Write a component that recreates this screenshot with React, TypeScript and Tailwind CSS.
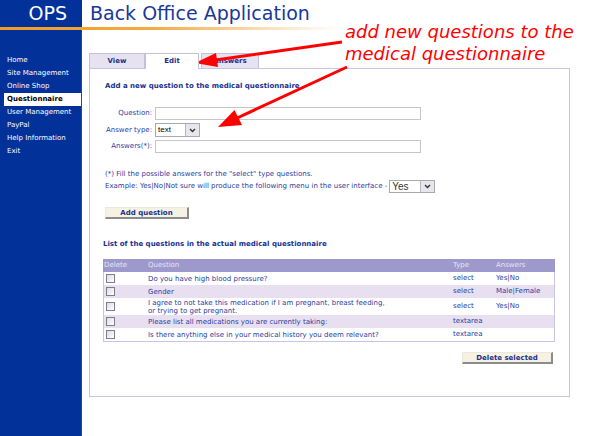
import React from 'react';

const menu = ['Home', 'Site Management', 'Online Shop', 'Questionnaire', 'User Management', 'PayPal', 'Help Information', 'Exit'];

const questions = [
  { q: 'Do you have high blood pressure?', type: 'select', answers: 'Yes|No', tall: false },
  { q: 'Gender', type: 'select', answers: 'Male|Female', tall: false },
  { q: 'I agree to not take this medication if I am pregnant, breast feeding,\nor trying to get pregnant.', type: 'select', answers: 'Yes|No', tall: true },
  { q: 'Please list all medications you are currently taking:', type: 'textarea', answers: '', tall: false },
  { q: 'Is there anything else in your medical history you deem relevant?', type: 'textarea', answers: '', tall: false },
];

const Chevron = () => (
  <svg width="7" height="5" viewBox="0 0 7 5">
    <path d="M1 1 L3.5 3.5 L6 1" fill="none" stroke="#333" strokeWidth="1.4" />
  </svg>
);

const FakeSelect = ({ value, width, bigText }: { value: string; width: string; bigText?: boolean }) => (
  <div className={`flex h-full ${width} items-stretch border border-[#a9a9b0] bg-white`}>
    <span className={`flex-1 pl-[2px] font-['Liberation_Sans',sans-serif] ${bigText ? 'text-[10px] leading-[11px] text-[#333]' : 'text-[8px] leading-[11px] text-black'}`}>{value}</span>
    <span className="flex w-[14px] items-center justify-center border-l border-[#b8b8c0] bg-[#e6e6ec]">
      <Chevron />
    </span>
  </div>
);

const Button = ({ label, width }: { label: string; width: string }) => (
  <div className={`${width} h-[12px] border-t border-l border-[#ece8dc] border-r-2 border-b-2 border-r-[#8c8c8c] border-b-[#8c8c8c] bg-[#f6f2e3] text-center text-[7px] font-bold leading-[10px] text-[#1b2f8c]`}>
    {label}
  </div>
);

export default function App() {
  return (
    <div className="relative h-[436px] w-[600px] overflow-hidden bg-white font-['DejaVu_Sans',sans-serif] text-[7px]">
      {/* Header */}
      <div className="flex h-[27px]">
        <div className="w-[82px] bg-[#02319a] pr-[15px] text-right text-[19px] leading-[27px] text-white">OPS</div>
        <div className="pl-[8px] text-[19px] leading-[27px] text-[#1a379b]">Back Office Application</div>
      </div>
      <div className="h-[3px] w-[340px] bg-[linear-gradient(to_right,#f29b22_0%,#f4aa45_45%,#fbe2c0_80%,#ffffff_100%)]" />

      <div className="flex h-[406px]">
        {/* Sidebar */}
        <nav className="w-[82px] border-r border-[#2247a8] bg-[#02319a] pt-[24px]">
          {menu.map((m) =>
            m === 'Questionnaire' ? (
              <div key={m} className="ml-[4px] h-[13px] bg-white pl-[3px] font-bold leading-[13px] text-black">
                {m}
              </div>
            ) : (
              <div key={m} className="h-[13px] pl-[7px] leading-[13px] text-white">
                {m}
              </div>
            )
          )}
        </nav>

        {/* Main */}
        <main className="flex-1 pl-[7px] pt-[22px]">
          {/* Tabs */}
          <div className="flex h-[16px] items-end">
            <div className="h-[15px] w-[56px] border border-b-0 border-[#c4c0dc] bg-[#e6e2f0] text-center font-bold leading-[14px] text-[#1b2f8c]">View</div>
            <div className="relative z-10 -mb-px h-[16px] w-[54px] border border-b-0 border-[#c4c0dc] bg-white text-center font-bold leading-[15px] text-[#1b2f8c]">Edit</div>
            <div className="ml-[2px] h-[15px] w-[58px] border border-b-0 border-[#c4c0dc] bg-[#e6e2f0] text-center font-bold leading-[14px] text-[#1b2f8c]">Answers</div>
          </div>

          {/* Panel */}
          <div className="h-[329px] w-[481px] border border-[#c8c4e6] bg-white">
            <div className="mt-[13px] pl-[15px] font-bold leading-[9px] text-[#16308f]">Add a new question to the medical questionnaire</div>

            <div className="mt-[16px] grid grid-cols-[65px_auto] gap-y-[3px] text-[#2a3c9e]">
              <div className="h-[13px] pr-[3px] text-right leading-[13px]">Question:</div>
              <div className="h-[13px] w-[266px] border border-[#c6c6cc] bg-white" />
              <div className="h-[14px] pr-[3px] text-right leading-[14px]">Answer type:</div>
              <div className="h-[14px]">
                <FakeSelect value="text" width="w-[45px]" />
              </div>
              <div className="h-[13px] pr-[3px] text-right leading-[13px]">Answers(*):</div>
              <div className="h-[13px] w-[266px] border border-[#c6c6cc] bg-white" />
            </div>

            <div className="mt-[17px] h-[9px] pl-[15px] leading-[9px] text-[#2a3c9e]">(*) Fill the possible answers for the "select" type questions.</div>
            <div className="flex h-[14px] items-center pl-[15px] text-[#2a3c9e]">
              <span>Example: Yes|No|Not sure will produce the following menu in the user interface -</span>
              <div className="ml-[2px] h-[13px]">
                <FakeSelect value="Yes" width="w-[46px]" bigText />
              </div>
            </div>

            <div className="mt-[14px] pl-[15px]">
              <Button label="Add question" width="w-[84px]" />
            </div>

            <div className="mt-[21px] pl-[13px] font-bold leading-[9px] text-[#16308f]">List of the questions in the actual medical questionnaire</div>

            {/* Table */}
            <div className="ml-[13px] mt-[10px] w-[452px]">
              <div className="grid h-[13px] grid-cols-[45px_305px_43px_59px] bg-[#9d99cc] leading-[13px] text-[#e6e4f7]">
                <span className="pl-[1px]">Delete</span>
                <span>Question</span>
                <span>Type</span>
                <span>Answers</span>
              </div>
              <div className="border-x border-b border-[#c8c4e6]">
                {questions.map((r, i) => (
                  <div
                    key={i}
                    className={`grid grid-cols-[44px_305px_43px_58px] items-center text-[#2a3c9e] ${r.tall ? 'h-[17px]' : 'h-[13px]'} ${i % 2 === 1 ? 'bg-[#e8e0f0]' : 'bg-white'}`}
                  >
                    <span className="pl-[2px]">
                      <span className="block h-[9px] w-[9px] border border-[#7c7c8c] bg-[linear-gradient(135deg,#dcdce4,#ffffff)]" />
                    </span>
                    <span className="whitespace-pre-line leading-[8px]">{r.q}</span>
                    <span>{r.type}</span>
                    <span>{r.answers}</span>
                  </div>
                ))}
              </div>
              <div className="mt-[10px] flex justify-end pr-[2px]">
                <Button label="Delete selected" width="w-[91px]" />
              </div>
            </div>
          </div>
        </main>
      </div>

      {/* Annotation */}
      <div className="absolute left-[345px] top-[21px] text-[18px] italic leading-[22px] text-[#ff0000]">
        add new questions to the
        <br />
        medical questionnaire
      </div>
      <svg className="pointer-events-none absolute left-0 top-0" width="600" height="436">
        <line x1="342" y1="42" x2="212" y2="60.5" stroke="#ff0000" strokeWidth="3" />
        <polygon points="195,63 218,67 216,53" fill="#ff0000" />
        <line x1="347" y1="67" x2="234" y2="119.5" stroke="#ff0000" strokeWidth="3" />
        <polygon points="218,127 242,125 234.5,110" fill="#ff0000" />
      </svg>
    </div>
  );
}
